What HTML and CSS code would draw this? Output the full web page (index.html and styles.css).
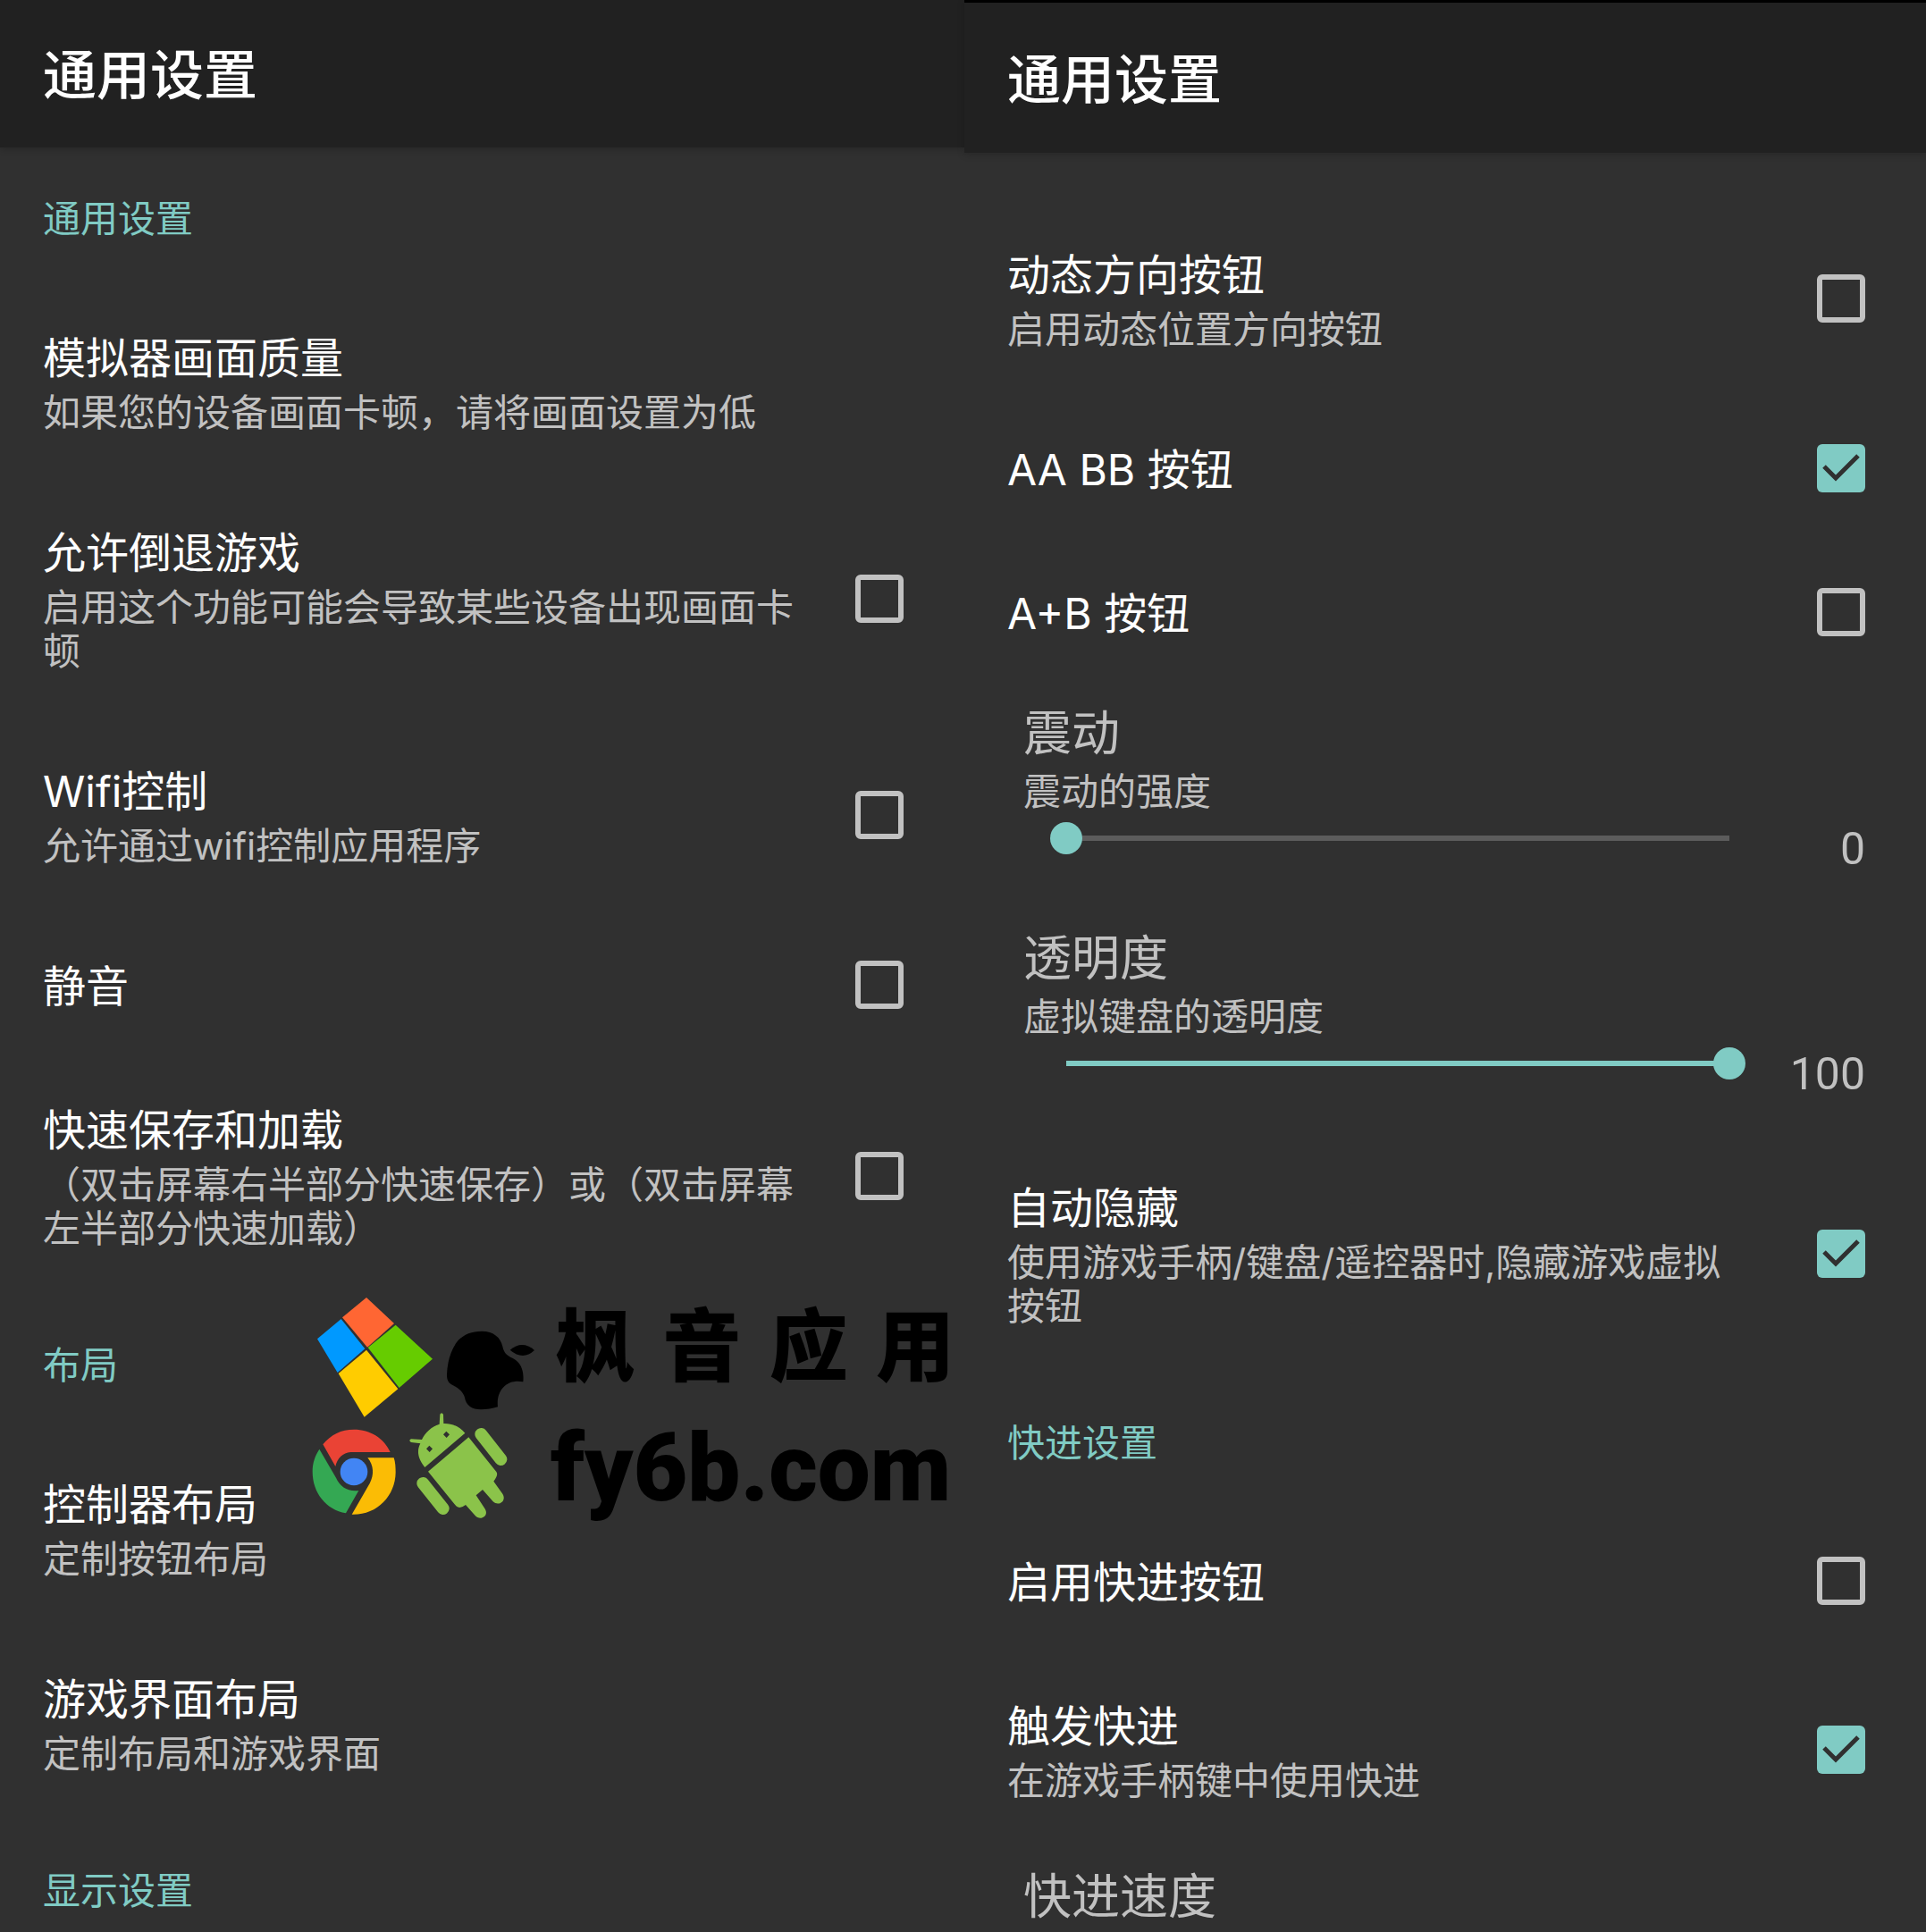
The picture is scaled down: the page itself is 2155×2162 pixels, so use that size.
FILE: index.html
```
<!DOCTYPE html>
<html lang="zh-CN">
<head>
    <meta charset="UTF-8">
    <meta name="viewport" content="width=device-width, initial-scale=1.0">
    <title>通用设置</title>
    <link rel="stylesheet" href="styles.css">
</head>
<body>
    <div class="screens">
        <section class="screen">
            <header class="bar"><h1>通用设置</h1></header>
            <div class="list">
                <h2 class="category">通用设置</h2>
                <div class="row">
                    <div class="text">
                        <p class="title">模拟器画面质量</p>
                        <p class="summary">如果您的设备画面卡顿，请将画面设置为低</p>
                    </div>
                </div>
                <label class="row">
                    <span class="text">
                        <span class="title">允许倒退游戏</span>
                        <span class="summary">启用这个功能可能会导致某些设备出现画面卡顿</span>
                    </span>
                    <input type="checkbox">
                </label>
                <label class="row">
                    <span class="text">
                        <span class="title">Wifi控制</span>
                        <span class="summary">允许通过wifi控制应用程序</span>
                    </span>
                    <input type="checkbox">
                </label>
                <label class="row">
                    <span class="text">
                        <span class="title">静音</span>
                    </span>
                    <input type="checkbox">
                </label>
                <label class="row">
                    <span class="text">
                        <span class="title">快速保存和加载</span>
                        <span class="summary">（双击屏幕右半部分快速保存）或（双击屏幕左半部分快速加载）</span>
                    </span>
                    <input type="checkbox">
                </label>

                <h2 class="category">布局</h2>
                <div class="row">
                    <div class="text">
                        <p class="title">控制器布局</p>
                        <p class="summary">定制按钮布局</p>
                    </div>
                </div>
                <div class="row">
                    <div class="text">
                        <p class="title">游戏界面布局</p>
                        <p class="summary">定制布局和游戏界面</p>
                    </div>
                </div>

                <h2 class="category">显示设置</h2>
            </div>

            <div class="watermark">
                <svg class="logos" viewBox="0 0 840 870" aria-hidden="true">
                    <!-- windows -->
                    <path fill="#ff6633" d="M240 66L333 153L243 233L159 133Z"/>
                    <path fill="#0099ff" d="M155 138L235 238L143 318L75 205Z"/>
                    <path fill="#66cc00" d="M338 158L462 272L350 369L245 234Z"/>
                    <path fill="#ffcc00" d="M240 242L346 373L233 467L146 321Z"/>
                    <!-- apple -->
                    <path fill="#000" d="M627 179C668 179 690 201 697 230C701 251 712 261 730 269C756 281 770 309 766 349C741 344 717 349 701 366C684 383 678 407 681 433C663 439 644 442 624 442C595 442 574 428 570 402C565 381 544 367 524 357C514 351 510 341 510 325C511 283 524 239 547 211C568 189 594 179 627 179Z"/>
                    <path fill="#000" d="M722 242Q763 208 804 243Q765 279 722 242Z"/>
                    <!-- chrome -->
                    <path fill="#ea4335" d="M94 559C121 526 155 509 198 509C253 509 299 538 320 585H187C161 587 142 605 136 633Z"/>
                    <path fill="#34a853" d="M82 575L138 671C151 701 177 718 214 714L171 790C105 778 59 722 59 650C59 622 67 598 82 575Z"/>
                    <path fill="#fbbc05" d="M244 604H332C337 618 338 635 338 653C337 733 274 797 191 794L251 690C266 662 265 629 244 604Z"/>
                    <circle fill="#4285f4" cx="198" cy="651" r="46"/>
                    <!-- android -->
                    <path fill="#8bc34a" d="M436 636C411 605 409 579 421 556L390 552Q380 546 390 541L426 543C438 518 458 500 485 491L487 458Q492 449 498 458L499 489C527 488 552 499 571 521Z"/>
                    <path fill="#8bc34a" d="M447 650L583 535L676 651Q684 661 667 683L696 724C713 748 684 769 665 751L630 711L608 730L637 774C654 799 622 817 605 798L573 762Q554 777 541 766Z"/>
                    <path stroke="#8bc34a" stroke-width="42" stroke-linecap="round" d="M625 525L691 609M430 690L497 774"/>
                    <path fill="#303030" d="M508 515L519 526L509 537L498 526ZM451 563L462 574L452 585L441 574Z"/>
                </svg>
                <div class="brand">
                    <div class="brand-name"><span>枫</span><span>音</span><span>应</span><span>用</span></div>
                    <div class="brand-site">fy6b.com</div>
                </div>
            </div>
        </section>

        <section class="screen second">
            <header class="bar"><h1>通用设置</h1></header>
            <div class="list">
                <label class="row">
                    <span class="text">
                        <span class="title">动态方向按钮</span>
                        <span class="summary">启用动态位置方向按钮</span>
                    </span>
                    <input type="checkbox">
                </label>
                <label class="row">
                    <span class="text">
                        <span class="title">AA BB 按钮</span>
                    </span>
                    <input type="checkbox" checked>
                </label>
                <label class="row">
                    <span class="text">
                        <span class="title">A+B 按钮</span>
                    </span>
                    <input type="checkbox">
                </label>

                <div class="slider-row">
                    <label class="slider-title" for="vibration">震动</label>
                    <p class="summary">震动的强度</p>
                    <div class="slider">
                        <input type="range" id="vibration" min="0" max="100" value="0" style="--value: 0%">
                        <output for="vibration">0</output>
                    </div>
                </div>
                <div class="slider-row">
                    <label class="slider-title" for="opacity">透明度</label>
                    <p class="summary">虚拟键盘的透明度</p>
                    <div class="slider">
                        <input type="range" id="opacity" min="0" max="100" value="100" style="--value: 100%">
                        <output for="opacity">100</output>
                    </div>
                </div>

                <label class="row">
                    <span class="text">
                        <span class="title">自动隐藏</span>
                        <span class="summary">使用游戏手柄/键盘/遥控器时,隐藏游戏虚拟按钮</span>
                    </span>
                    <input type="checkbox" checked>
                </label>

                <h2 class="category">快进设置</h2>
                <label class="row">
                    <span class="text">
                        <span class="title">启用快进按钮</span>
                    </span>
                    <input type="checkbox">
                </label>
                <label class="row">
                    <span class="text">
                        <span class="title">触发快进</span>
                        <span class="summary">在游戏手柄键中使用快进</span>
                    </span>
                    <input type="checkbox" checked>
                </label>
                <div class="slider-row">
                    <p class="slider-title">快进速度</p>
                </div>
            </div>
        </section>
    </div>
</body>
</html>
```
FILE: styles.css
```
* {
    box-sizing: border-box;
    margin: 0;
    padding: 0;
}
body {
    background-color: #303030;
    color: #fff;
    font-family: Inter, "Noto Sans CJK SC", sans-serif;
}
.screens {
    display: grid;
    grid-template-columns: 1079fr 1076fr;
    height: 100vh;
    overflow: hidden;
}
.screen {
    position: relative;
    min-width: 0;
}
.bar {
    display: flex;
    align-items: center;
    height: 165px;
    padding: 2px 48px 0;
    background-color: #212121;
    box-shadow: 0 2px 8px rgba(0, 0, 0, 0.2);
}
.bar h1 {
    font-size: 60px;
    font-weight: 500;
    line-height: 80px;
}
.list {
    padding-top: 3px;
}
.second .bar {
    height: 171px;
    padding-top: 4px;
    border-top: 3px solid #000;
}
.second .list {
    padding-top: 56px;
}
.category {
    padding: 52px 48px 51px;
    color: #80cbc4;
    font-size: 42px;
    font-weight: 400;
    line-height: 49px;
}
.row {
    display: flex;
    align-items: center;
    gap: 68px;
    padding: 48px 68px 48px 48px;
}
.text {
    flex: 1;
    min-width: 0;
}
.title,
.summary,
.slider-title {
    display: block;
}
.title {
    font-size: 48px;
    line-height: 65px;
}
.summary {
    padding: 4px 0;
    color: #c1c1c1;
    font-size: 42px;
    line-height: 49px;
}
input[type="checkbox"] {
    appearance: none;
    flex: none;
    width: 54px;
    height: 54px;
    margin-bottom: 4px;
    border: 6px solid #c1c1c1;
    border-radius: 6px;
}
input[type="checkbox"]:checked {
    border: none;
    background: #80cbc4 url("data:image/svg+xml,%3Csvg xmlns='http://www.w3.org/2000/svg' viewBox='0 0 54 54'%3E%3Cpath d='M8 25L21 38L46 13' fill='none' stroke='%23303030' stroke-width='5'/%3E%3C/svg%3E") center / 100% no-repeat;
}
.slider-row {
    padding: 18px 68px 33px 66px;
    color: #c1c1c1;
}
.slider-title {
    font-size: 54px;
    line-height: 72px;
}
.slider {
    display: flex;
    align-items: flex-start;
    padding-left: 30px;
}
input[type="range"] {
    appearance: none;
    flex: 1;
    min-width: 0;
    height: 48px;
    background: linear-gradient(to right, #80cbc4 var(--value), #5c5c5c var(--value)) center / calc(100% - 36px) 6px no-repeat;
}
input[type="range"]::-webkit-slider-thumb {
    appearance: none;
    width: 36px;
    height: 36px;
    border-radius: 50%;
    background-color: #80cbc4;
}
.slider output {
    width: 134px;
    font-family: Roboto, sans-serif;
    font-size: 50px;
    line-height: 72px;
    text-align: right;
}
/* site mark floating over the list */
.watermark {
    position: absolute;
    top: 1430px;
    left: 330px;
    display: flex;
    color: #000;
    pointer-events: none;
}
.logos {
    width: 280px;
    height: 290px;
}
.brand {
    width: 452px;
    margin-left: 6px;
    padding-top: 10px;
}
.brand-name {
    display: flex;
    justify-content: space-between;
    padding-left: 6px;
    font-family: "Noto Sans CJK SC", sans-serif;
    font-size: 88px;
    font-weight: 900;
    line-height: 120px;
}
.brand-site {
    font-family: Roboto, sans-serif;
    font-size: 105px;
    font-weight: 900;
    line-height: 168px;
}
```
